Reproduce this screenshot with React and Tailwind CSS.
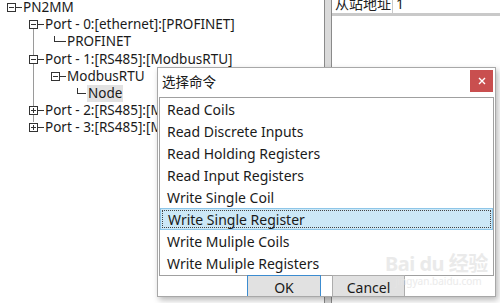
import React from "react";

const FONT = { fontFamily: '"Noto Sans", "Noto Sans CJK SC", sans-serif' };

// kotak +/- di pohon, dengan garis ke teks
const BoxIcon = ({ plus }) => (
  <svg width="16" height="17" viewBox="0 0 16 17" className="shrink-0">
    <rect x="0.5" y="4.5" width="8" height="8" fill="white" stroke="#333" />
    <line x1="2" y1="8.5" x2="7" y2="8.5" stroke="#333" />
    {plus && <line x1="4.5" y1="6" x2="4.5" y2="11" stroke="#333" />}
    <line x1="9" y1="8.5" x2="15" y2="8.5" stroke="#333" />
  </svg>
);

const LeafIcon = ({ w }) => (
  <svg width={w} height="17" viewBox={`0 0 ${w} 17`} className="shrink-0">
    <line x1="0.5" y1="3" x2="0.5" y2="9" stroke="#333" />
    <line x1="0.5" y1="8.5" x2={w - 1} y2="8.5" stroke="#333" />
  </svg>
);

const TreeRow = ({ left, kind, label, selected, leafW = 12 }) => (
  <div className="flex items-center h-[17.2px] whitespace-nowrap" style={{ paddingLeft: left }}>
    {kind === "minus" && <BoxIcon />}
    {kind === "plus" && <BoxIcon plus />}
    {kind === "leaf" && <LeafIcon w={leafW} />}
    <span
      className={
        "text-[13.5px] leading-[17px] text-[#1a1a1a] " +
        (selected ? "bg-[#e2e2e2] px-[1px]" : "")
      }
    >
      {label}
    </span>
  </div>
);

const commands = [
  "Read Coils",
  "Read Discrete Inputs",
  "Read Holding Registers",
  "Read Input Registers",
  "Write Single Coil",
  "Write Single Register",
  "Write Muliple Coils",
  "Write Muliple Registers",
];

export default function App() {
  const active = 5;

  return (
    <div className="relative w-[500px] h-[303px] overflow-hidden bg-white flex" style={FONT}>
      {/* panel pohon kiri */}
      <div className="relative w-[324px] shrink-0 -mt-[1px]">
        <div className="absolute left-[33px] top-[29px] h-[94px] w-px bg-[#9a9a9a]" />
        <div className="relative">
          <TreeRow left={7} kind="minus" label="PN2MM" />
          <TreeRow left={29} kind="minus" label="Port - 0:[ethernet]:[PROFINET]" />
          <TreeRow left={54} kind="leaf" label="PROFINET" leafW={13} />
          <TreeRow left={29} kind="minus" label="Port - 1:[RS485]:[ModbusRTU]" />
          <TreeRow left={51} kind="minus" label="ModbusRTU" />
          <TreeRow left={77} kind="leaf" label="Node" leafW={10} selected />
          <TreeRow left={29} kind="plus" label="Port - 2:[RS485]:[ModbusRTU]" />
          <TreeRow left={29} kind="plus" label="Port - 3:[RS485]:[ModbusRTU]" />
        </div>
      </div>

      {/* splitter */}
      <div className="w-[8px] shrink-0 bg-[#dadada] border-l border-r border-[#8a8a8a]" />

      {/* panel kanan */}
      <div className="flex-1 flex flex-col">
        <div className="flex h-[16px] border-b-[3px] border-[#c9c9c9] overflow-hidden">
          <div className="w-[60px] pl-[3px] -mt-[6px] text-[14px] leading-[20px] text-[#222]">从站地址</div>
          <div className="w-px bg-[#c9c9c9]" />
          <div className="flex-1 pl-[3px] -mt-[6px] text-[14px] leading-[20px] text-[#222]">1</div>
        </div>
        <div className="flex-1 bg-white" />
      </div>

      {/* dialog pilih perintah */}
      <div className="absolute left-[157px] top-[67px] w-[339px] h-[230px] bg-white border border-[#a8a8a8] shadow-[2px_3px_6px_rgba(0,0,0,0.28)] overflow-hidden flex flex-col">
        <div className="relative h-[29px] shrink-0 flex items-center pl-[4px]">
          <span className="text-[13.5px] text-[#1a1a1a]">选择命令</span>
          <div className="absolute left-[312px] top-[2px] w-[23px] h-[22px] bg-[#c94f4f] flex items-center justify-center">
            <svg width="8" height="8" viewBox="0 0 8 8">
              <path d="M1 1 L7 7 M7 1 L1 7" stroke="white" strokeWidth="1.4" />
            </svg>
          </div>
        </div>
        <div className="ml-[1px] w-[335px] h-[179px] shrink-0 border border-[#a0a0a0]">
          {commands.map((c, i) =>
            i === active ? (
              <div key={c} className="h-[22px] bg-[#cce8f7] border border-[#8ec6e8] p-[1px]">
                <div className="h-full border border-dotted border-[#444] flex items-center pl-[5px] text-[14px] text-[#1a1a1a]">
                  {c}
                </div>
              </div>
            ) : (
              <div key={c} className="h-[22px] flex items-center pl-[7px] text-[14px] text-[#1a1a1a]">
                {c}
              </div>
            )
          )}
        </div>
        <div className="flex pl-[89px] gap-[11px] -mt-[1px]">
          <button className="w-[74px] h-[24px] bg-[#e1e1e1] border border-[#3c8cd0] text-[14px] text-[#1a1a1a]">
            OK
          </button>
          <button className="w-[73px] h-[24px] bg-[#e1e1e1] border border-[#adadad] text-[14px] text-[#1a1a1a]">
            Cancel
          </button>
        </div>
      </div>

      {/* watermark */}
      <div className="absolute left-[385px] top-[254px] pointer-events-none select-none text-[#e6e6e6] opacity-80">
        <div className="text-[20px] leading-[20px] font-bold tracking-tight">Bai du 经验</div>
        <div className="text-[10px] leading-[14px] ml-[10px]">jingyan.baidu.com</div>
      </div>
    </div>
  );
}
